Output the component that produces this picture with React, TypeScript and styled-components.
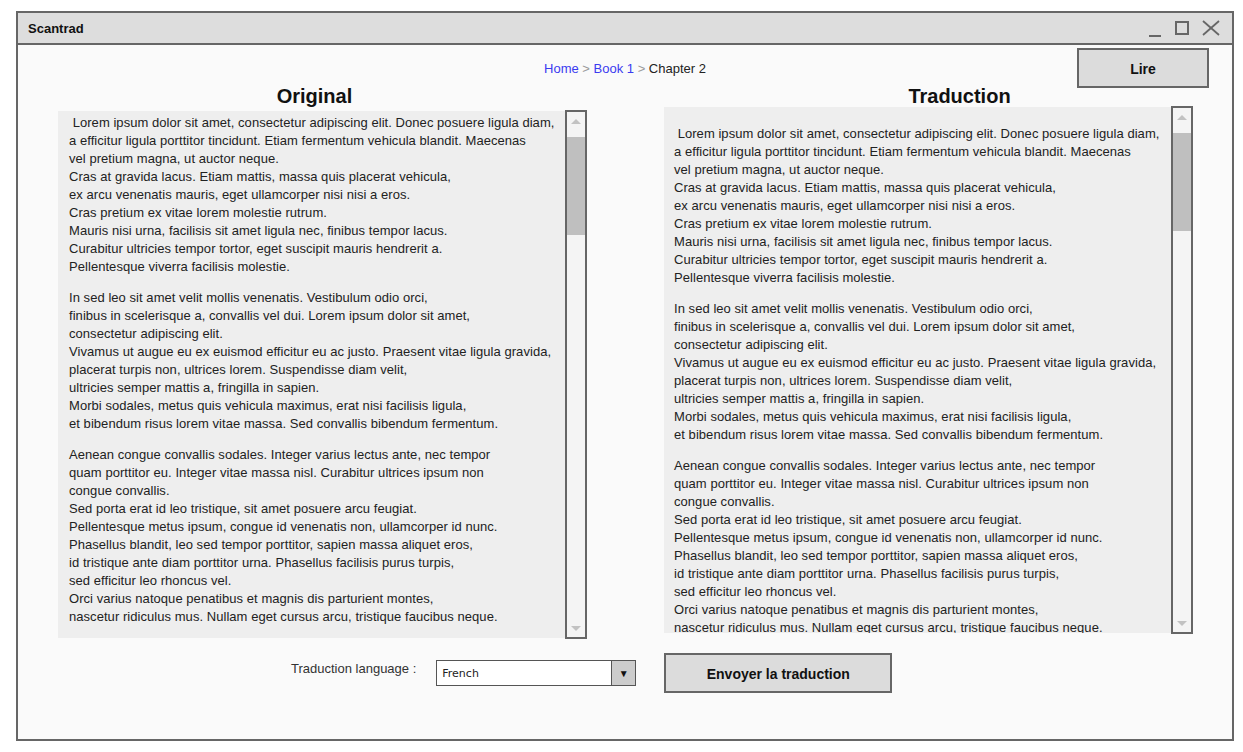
import * as React from "react";
import styled, { createGlobalStyle } from "styled-components";

const paragraphs = [
  ` Lorem ipsum dolor sit amet, consectetur adipiscing elit. Donec posuere ligula diam,
a efficitur ligula porttitor tincidunt. Etiam fermentum vehicula blandit. Maecenas
vel pretium magna, ut auctor neque.
Cras at gravida lacus. Etiam mattis, massa quis placerat vehicula,
ex arcu venenatis mauris, eget ullamcorper nisi nisi a eros.
Cras pretium ex vitae lorem molestie rutrum.
Mauris nisi urna, facilisis sit amet ligula nec, finibus tempor lacus.
Curabitur ultricies tempor tortor, eget suscipit mauris hendrerit a.
Pellentesque viverra facilisis molestie.`,
  `In sed leo sit amet velit mollis venenatis. Vestibulum odio orci,
finibus in scelerisque a, convallis vel dui. Lorem ipsum dolor sit amet,
consectetur adipiscing elit.
Vivamus ut augue eu ex euismod efficitur eu ac justo. Praesent vitae ligula gravida,
placerat turpis non, ultrices lorem. Suspendisse diam velit,
ultricies semper mattis a, fringilla in sapien.
Morbi sodales, metus quis vehicula maximus, erat nisi facilisis ligula,
et bibendum risus lorem vitae massa. Sed convallis bibendum fermentum.`,
  `Aenean congue convallis sodales. Integer varius lectus ante, nec tempor
quam porttitor eu. Integer vitae massa nisl. Curabitur ultrices ipsum non
congue convallis.
Sed porta erat id leo tristique, sit amet posuere arcu feugiat.
Pellentesque metus ipsum, congue id venenatis non, ullamcorper id nunc.
Phasellus blandit, leo sed tempor porttitor, sapien massa aliquet eros,
id tristique ante diam porttitor urna. Phasellus facilisis purus turpis,
sed efficitur leo rhoncus vel.
Orci varius natoque penatibus et magnis dis parturient montes,
nascetur ridiculus mus. Nullam eget cursus arcu, tristique faucibus neque.`,
];

const GlobalStyle = createGlobalStyle`
  * { box-sizing: border-box; }
  body {
    margin: 0;
    background: #ffffff;
    font-family: "Liberation Sans", Arial, sans-serif;
    color: #222;
  }
`;

const TextPanel: React.FunctionComponent<{
  top: number;
  pad: number;
  left: number;
  height: number;
}> = ({ top, pad, left, height }) => (
  <Panel $top={top} $height={height}>
    <TextBox $pad={pad} $left={left}>
      {paragraphs.map((p, i) => (
        <Para key={i}>{p}</Para>
      ))}
    </TextBox>
    <Scrollbar>
      <ArrowZone>
        <svg width="12" height="8" viewBox="0 0 12 8">
          <polygon points="1,7 6,2 11,7" fill="#c2c2c2" />
        </svg>
      </ArrowZone>
      <Thumb />
      <Track />
      <ArrowZone $bottom>
        <svg width="12" height="8" viewBox="0 0 12 8">
          <polygon points="1,1 6,6 11,1" fill="#c2c2c2" />
        </svg>
      </ArrowZone>
    </Scrollbar>
  </Panel>
);

const App: React.FunctionComponent = () => {
  return (
    <>
      <GlobalStyle />
      <Window>
        <TitleBar>
          <Title>Scantrad</Title>
          <Controls>
            <svg width="14" height="18" viewBox="0 0 14 18">
              <line x1="1" y1="17" x2="13" y2="17" stroke="#666" strokeWidth="2" />
            </svg>
            <svg width="14" height="18" viewBox="0 0 14 18">
              <rect x="1" y="3" width="12" height="12" fill="none" stroke="#666" strokeWidth="2" />
            </svg>
            <svg width="18" height="18" viewBox="0 0 18 18">
              <line x1="1" y1="2" x2="17" y2="16" stroke="#666" strokeWidth="1.8" />
              <line x1="17" y1="2" x2="1" y2="16" stroke="#666" strokeWidth="1.8" />
            </svg>
          </Controls>
        </TitleBar>

        <Content>
          <HeaderRow>
            <span />
            <Breadcrumb>
              <Crumb href="#">Home</Crumb>
              <Sep> &gt; </Sep>
              <Crumb href="#">Book 1</Crumb>
              <Sep> &gt; </Sep>
              <Current>Chapter 2</Current>
            </Breadcrumb>
            <Button $w={132}>Lire</Button>
          </HeaderRow>

          <Columns>
            <Column>
              <Heading $shift={-8}>Original</Heading>
              <TextPanel top={4} pad={3} left={11} height={529} />
            </Column>
            <Column>
              <Heading $shift={31}>Traduction</Heading>
              <TextPanel top={0} pad={18} left={10} height={528} />
            </Column>
          </Columns>

          <BottomRow>
            <Label>Traduction language :</Label>
            <Select>
              <SelectValue>French</SelectValue>
              <SelectToggle>▼</SelectToggle>
            </Select>
            <Button $w={228}>Envoyer la traduction</Button>
          </BottomRow>
        </Content>
      </Window>
    </>
  );
};

export default App;

const Window = styled.div`
  margin: 11px 0 0 16px;
  width: 1218px;
  height: 730px;
  border: 2px solid #666;
  background: #fafafa;
  display: flex;
  flex-direction: column;
`;

const TitleBar = styled.div`
  height: 32px;
  flex-shrink: 0;
  background: #dddddd;
  border-bottom: 2px solid #666;
  display: flex;
  align-items: center;
  justify-content: space-between;
  padding: 0 12px 0 10px;
`;

const Title = styled.span`
  font-size: 13px;
  font-weight: bold;
  color: #111;
`;

const Controls = styled.div`
  display: flex;
  align-items: center;
  gap: 13px;

  svg {
    display: block;
  }
`;

const Content = styled.div`
  flex: 1;
  display: flex;
  flex-direction: column;
`;

const HeaderRow = styled.div`
  display: grid;
  grid-template-columns: 1fr auto 1fr;
  align-items: center;
  height: 40px;
  margin-top: 3px;
`;

const Breadcrumb = styled.div`
  font-size: 13px;
  white-space: pre;
  padding-top: 1px;
`;

const Crumb = styled.a`
  color: #3b3bf0;
  text-decoration: none;
`;

const Sep = styled.span`
  color: #999;
`;

const Current = styled.span`
  color: #222;
`;

const Button = styled.button<{ $w: number }>`
  justify-self: end;
  margin-right: 23px;
  width: ${({ $w }) => $w}px;
  height: 40px;
  border: 2px solid #666;
  background: #dcdcdc;
  font-family: "Liberation Sans", Arial, sans-serif;
  font-size: 14px;
  font-weight: bold;
  color: #111;
  padding: 2px 0 0;
`;

const Columns = styled.div`
  display: grid;
  grid-template-columns: 529px 529px;
  column-gap: 77px;
  padding-left: 40px;
  margin-top: -4px;
  align-items: start;
`;

const Column = styled.div`
  display: flex;
  flex-direction: column;
`;

const Heading = styled.h2<{ $shift: number }>`
  margin: 0;
  height: 22px;
  line-height: 24px;
  font-size: 20px;
  font-weight: bold;
  color: #111;
  text-align: center;
  padding-left: ${({ $shift }) => ($shift > 0 ? $shift * 2 : 0)}px;
  padding-right: ${({ $shift }) => ($shift < 0 ? -$shift * 2 : 0)}px;
`;

const Panel = styled.div<{ $top: number; $height: number }>`
  display: flex;
  margin-top: ${({ $top }) => $top}px;
  height: ${({ $height }) => $height}px;
`;

const TextBox = styled.div<{ $pad: number; $left: number }>`
  flex: 1;
  background: #eeeeee;
  overflow: hidden;
  padding: ${({ $pad }) => $pad}px 0 0 ${({ $left }) => $left}px;
  margin: 1px 0;
  font-size: 13px;
  line-height: 18px;
  letter-spacing: 0.05px;
  color: #222;
`;

const Para = styled.p`
  margin: 0 0 13px;
  white-space: pre;
`;

const Scrollbar = styled.div`
  width: 22px;
  border: 2px solid #666;
  background: #f4f4f4;
  display: flex;
  flex-direction: column;
`;

const ArrowZone = styled.div<{ $bottom?: boolean }>`
  height: 25px;
  display: flex;
  justify-content: center;
  align-items: ${({ $bottom }) => ($bottom ? "flex-end" : "flex-start")};
  padding: ${({ $bottom }) => ($bottom ? "0 0 4px" : "5px 0 0")};

  svg {
    display: block;
  }
`;

const Thumb = styled.div`
  height: 98px;
  background: #bfbfbf;
`;

const Track = styled.div`
  flex: 1;
`;

const BottomRow = styled.div`
  display: flex;
  align-items: center;
  margin-top: 14px;
  padding-left: 273px;
`;

const Label = styled.span`
  font-size: 13px;
  color: #333;
  margin: 0 20px 10px 0;
`;

const Select = styled.div`
  width: 200px;
  height: 26px;
  border: 1px solid #555;
  background: #fff;
  display: flex;
  margin-right: 28px;
`;

const SelectValue = styled.span`
  flex: 1;
  padding: 6px 0 0 5px;
  font-family: "DejaVu Sans", sans-serif;
  font-size: 11px;
  color: #222;
`;

const SelectToggle = styled.span`
  width: 24px;
  border-left: 1px solid #555;
  background: #cccccc;
  display: flex;
  align-items: center;
  justify-content: center;
  font-size: 10px;
  color: #111;
`;
